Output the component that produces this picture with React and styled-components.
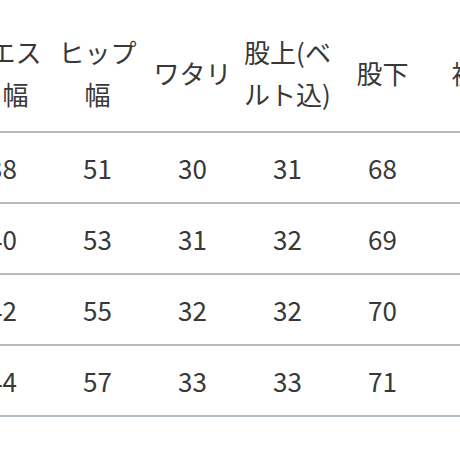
import React from 'react'
import styled, { createGlobalStyle } from 'styled-components'

const GlobalStyle = createGlobalStyle`
  html, body {
    margin: 0;
    padding: 0;
    background: #fff;
    overflow: hidden;
  }
`

const headers = ['ウエスト幅', 'ヒップ幅', 'ワタリ', '股上(ベルト込)', '股下', '裾幅']

const rows = [
  ['38', '51', '30', '31', '68', '20'],
  ['40', '53', '31', '32', '69', '21'],
  ['42', '55', '32', '32', '70', '22'],
  ['44', '57', '33', '33', '71', '23'],
]

function App() {
  return (
    <>
      <GlobalStyle />
      <Wrap>
        <SizeTable>
          <thead>
            <tr>
              {headers.map(h => <Th key={h}>{h}</Th>)}
            </tr>
          </thead>
          <tbody>
            {rows.map((r, i) => (
              <tr key={i}>
                {r.map((v, j) => <Td key={j}>{v}</Td>)}
              </tr>
            ))}
          </tbody>
        </SizeTable>
      </Wrap>
    </>
  )
}

const Wrap = styled.div`
  width: 460px;
  height: 460px;
  overflow: hidden;
  padding-top: 15px;
  box-sizing: border-box;
`
const SizeTable = styled.table`
  margin-left: -45px;
  border-collapse: collapse;
  table-layout: fixed;
  width: 570px;
  font-family: "Noto Sans CJK JP", "Noto Sans", sans-serif;
  color: #383838;
`
const Th = styled.th`
  width: 95px;
  box-sizing: border-box;
  font-size: 26px;
  font-weight: normal;
  line-height: 42px;
  padding: 16px 0;
  text-align: center;
  vertical-align: middle;
  border-bottom: 2px solid #b4bcc3;
  word-break: break-all;
`
const Td = styled.td`
  font-size: 26px;
  line-height: 40px;
  height: 40px;
  padding: 15px 0 14px;
  text-align: center;
  border-bottom: 2px solid #b4bcc3;
`

export default App
